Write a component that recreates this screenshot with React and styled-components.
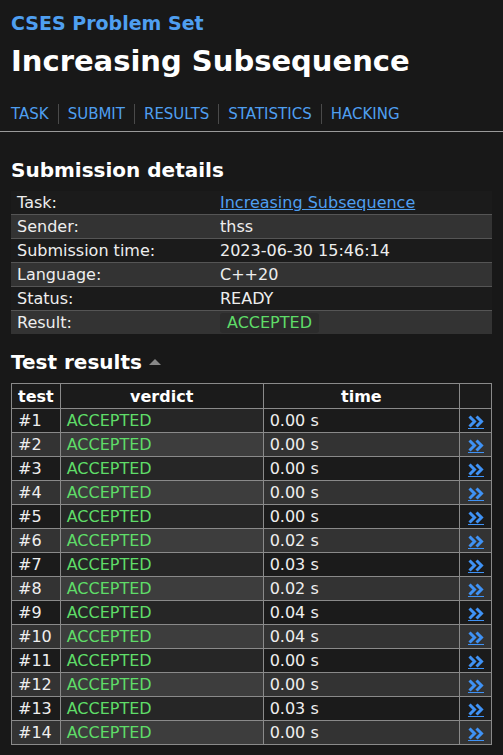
import React from 'react';
import styled, { createGlobalStyle } from 'styled-components';

const GlobalStyle = createGlobalStyle`
  html, body {
    margin: 0;
    padding: 0;
    background: #181818;
  }
  body {
    color: #eeeeee;
    font-family: "DejaVu Sans", sans-serif;
    font-size: 16px;
  }
`;

const Page = styled.div`
  padding: 0 11px 12px 11px;
`;

const Header = styled.div`
  padding-top: 11px;
`;

const SiteTitle = styled.a`
  display: block;
  color: #4f9ff0;
  font-weight: bold;
  font-size: 19px;
  text-decoration: none;
  line-height: 24px;
`;

const Heading = styled.h1`
  margin: 6px 0 0 0;
  font-size: 29px;
  line-height: 40px;
  color: #ffffff;
`;

const Nav = styled.div`
  display: flex;
  align-items: center;
  margin: 23px -11px 0 -11px;
  padding: 0 0 7px 11px;
  border-bottom: 1px solid #9a9a9a;
`;

const NavLink = styled.a`
  color: #4f9ff0;
  font-size: 15px;
  line-height: 20px;
  text-decoration: none;
  padding: 0 9px 0 9px;
  border-left: 1px solid #4a4a4a;
  &:first-child {
    padding-left: 0;
    border-left: none;
  }
`;

const SectionTitle = styled.h2`
  margin: ${p => p.$top}px 0 7px 0;
  font-size: 20px;
  line-height: 28px;
  color: #ffffff;
  display: flex;
  align-items: center;
`;

const Caret = styled.span`
  display: inline-block;
  margin-left: 7px;
  width: 0;
  height: 0;
  border-left: 6px solid transparent;
  border-right: 6px solid transparent;
  border-bottom: 6px solid #888888;
`;

const DetailsTable = styled.table`
  width: 100%;
  border-collapse: collapse;
`;

const DetailsRow = styled.tr`
  background: ${p => (p.$alt ? '#333333' : '#1b1b1b')};
  border-bottom: 1px solid #555555;
  &:last-child {
    border-bottom: none;
  }
`;

const DetailsCell = styled.td`
  padding: 0 6px;
  height: 23px;
  line-height: 23px;
  width: ${p => p.$w || 'auto'};
  color: #eeeeee;
`;

const TaskLink = styled.a`
  color: #4f9ff0;
  text-decoration: underline;
`;

const Badge = styled.span`
  display: inline-block;
  background: #2c2c2c;
  color: #5fdc68;
  padding: 0 7px;
  line-height: 20px;
  border-radius: 3px;
`;

const ResultsTable = styled.table`
  width: 100%;
  border-collapse: collapse;
  border: 1px solid #8a8a8a;
`;

const HeadCell = styled.th`
  border: 1px solid #8a8a8a;
  font-weight: bold;
  text-align: center;
  height: 24px;
  padding: 0 6px;
  color: #ffffff;
  background: #1b1b1b;
`;

const ResultRow = styled.tr`
  background: ${p => (p.$alt ? '#333333' : '#1b1b1b')};
`;

const Cell = styled.td`
  border: 1px solid #8a8a8a;
  height: 23px;
  line-height: 23px;
  padding: 0 6px;
  width: ${p => p.$w || 'auto'};
  color: #eeeeee;
`;

const VerdictCell = styled(Cell)`
  background: rgba(255, 255, 255, 0.05);
  color: #5fdc68;
`;

const ArrowCell = styled(Cell)`
  text-align: center;
  padding: 0;
`;

const Arrow = styled.a`
  display: inline-flex;
  flex-direction: column;
  align-items: center;
  vertical-align: middle;
  padding-top: 1px;
  border-bottom: 1.5px solid #3f92f5;
`;

const DoubleChevron = () => (
  <svg width="16" height="13" viewBox="0 0 16 13">
    <path
      d="M1.5 1.5 L6.5 6.5 L1.5 11.5 M8.5 1.5 L13.5 6.5 L8.5 11.5"
      fill="none"
      stroke="#3f92f5"
      strokeWidth="3"
      strokeLinejoin="miter"
    />
  </svg>
);

const details = [
  ['Task:', 'link', 'Increasing Subsequence'],
  ['Sender:', 'text', 'thss'],
  ['Submission time:', 'text', '2023-06-30 15:46:14'],
  ['Language:', 'text', 'C++20'],
  ['Status:', 'text', 'READY'],
  ['Result:', 'badge', 'ACCEPTED'],
];

const times = ['0.00', '0.00', '0.00', '0.00', '0.00', '0.02', '0.03', '0.02', '0.04', '0.04', '0.00', '0.00', '0.03', '0.00'];

const App = () => {
  return (
    <Page>
      <GlobalStyle />
      <Header>
        <SiteTitle>CSES Problem Set</SiteTitle>
        <Heading>Increasing Subsequence</Heading>
      </Header>
      <Nav>
        <NavLink>TASK</NavLink>
        <NavLink>SUBMIT</NavLink>
        <NavLink>RESULTS</NavLink>
        <NavLink>STATISTICS</NavLink>
        <NavLink>HACKING</NavLink>
      </Nav>

      <SectionTitle $top={24}>Submission details</SectionTitle>
      <DetailsTable>
        <tbody>
          {details.map(([label, kind, value], i) => (
            <DetailsRow key={label} $alt={i % 2 === 1}>
              <DetailsCell $w="191px">{label}</DetailsCell>
              <DetailsCell>
                {kind === 'link' && <TaskLink>{value}</TaskLink>}
                {kind === 'text' && value}
                {kind === 'badge' && <Badge>{value}</Badge>}
              </DetailsCell>
            </DetailsRow>
          ))}
        </tbody>
      </DetailsTable>

      <SectionTitle $top={14}>
        Test results <Caret />
      </SectionTitle>
      <ResultsTable>
        <thead>
          <tr>
            <HeadCell>test</HeadCell>
            <HeadCell>verdict</HeadCell>
            <HeadCell>time</HeadCell>
            <HeadCell></HeadCell>
          </tr>
        </thead>
        <tbody>
          {times.map((t, i) => (
            <ResultRow key={i} $alt={i % 2 === 1}>
              <Cell $w="35px">#{i + 1}</Cell>
              <VerdictCell $w="190px">ACCEPTED</VerdictCell>
              <Cell>{t} s</Cell>
              <ArrowCell $w="31px">
                <Arrow>
                  <DoubleChevron />
                </Arrow>
              </ArrowCell>
            </ResultRow>
          ))}
        </tbody>
      </ResultsTable>
    </Page>
  );
};

export default App;
